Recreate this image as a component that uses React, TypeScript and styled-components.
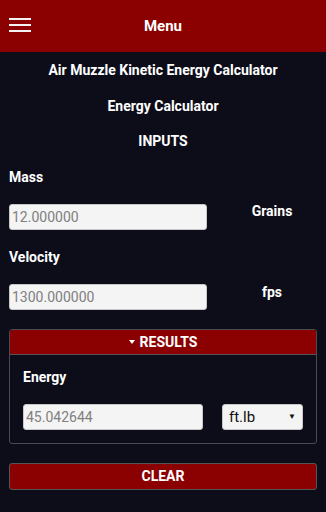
import React from 'react';
import styled, {createGlobalStyle} from 'styled-components';

const red = '#8b0000';
const bg = '#0d0d1a';
const light = '#f4f4f4';

const GlobalStyle = createGlobalStyle`
    html, body {
        margin: 0;
        padding: 0;
        background: ${bg};
    }
    body {
        font-family: Roboto, "Liberation Sans", sans-serif;
        color: #ffffff;
    }
`

const Page = styled.div`
    width: 326px;
    min-height: 512px;
    background: ${bg};
`

const Header = styled.header`
    height: 52px;
    background: ${red};
    display: flex;
    align-items: center;
    position: relative;
    justify-content: center;
`

const Burger = styled.div`
    position: absolute;
    left: 9px;
    top: 18px;
    width: 22px;
    display: flex;
    flex-direction: column;
    gap: 4px;

    span{
        display: block;
        height: 2px;
        background: #f2f2f2;
    }
`

const HeaderTitle = styled.h1`
    margin: 0;
    font-size: 15px;
    font-weight: 700;
`

const Main = styled.main`
    padding: 9px 9px 20px 9px;
`

const Heading = styled.h2`
    margin: 0;
    height: 35.5px;
    line-height: 19px;
    font-size: 14px;
    font-weight: 700;
    text-align: center;
`

const Label = styled.div`
    font-size: 14px;
    font-weight: 700;
    height: 36px;
    line-height: 18px;
`

type RowProps = {
    unitOffset: number;
}

const InputRow = styled.div`
    display: flex;
    align-items: flex-start;
    height: 44px;
`

const Field = styled.div<{w: number}>`
    width: ${({w}) => w}px;
    height: 26px;
    box-sizing: border-box;
    background: ${light};
    border: 1px solid #c8c8c8;
    border-radius: 3px;
    color: #808080;
    font-size: 14px;
    padding: 0 2px;
    display: flex;
    align-items: center;
`

const Unit = styled.div<RowProps>`
    flex: 1;
    padding-left: 20px;
    text-align: center;
    font-size: 14px;
    font-weight: 700;
    margin-top: ${({unitOffset}) => unitOffset}px;
`

const Panel = styled.section`
    margin-top: 1px;
    border: 1px solid #4a4a50;
    border-radius: 3px;
    overflow: hidden;
`

const PanelHeader = styled.div`
    height: 24px;
    background: ${red};
    border-bottom: 1px solid #555;
    display: flex;
    align-items: center;
    justify-content: center;
    gap: 5px;
    font-size: 14px;
    font-weight: 700;
`

const Caret = styled.span`
    width: 0;
    height: 0;
    border-left: 3px solid transparent;
    border-right: 3px solid transparent;
    border-top: 4px solid #fff;
`

const PanelBody = styled.div`
    padding: 13px 13px 13px 13px;
`

const ResultRow = styled.div`
    display: flex;
    align-items: center;
    justify-content: space-between;
`

const Select = styled.div`
    width: 81px;
    height: 26px;
    box-sizing: border-box;
    background: ${light};
    border: 1px solid #c8c8c8;
    border-radius: 3px;
    color: #111;
    font-size: 15px;
    padding: 0 6px;
    display: flex;
    align-items: center;
    justify-content: space-between;

    small{
        font-size: 8px;
    }
`

const ClearButton = styled.button`
    margin-top: 19px;
    width: 100%;
    height: 27px;
    background: ${red};
    border: 1px solid #555;
    border-radius: 3px;
    color: #fff;
    font-family: inherit;
    font-size: 14px;
    font-weight: 700;
    cursor: pointer;
`

function App(){
 return(
  <>
  <GlobalStyle/>
  <Page>
    <Header>
        <Burger><span/><span/><span/></Burger>
        <HeaderTitle>Menu</HeaderTitle>
    </Header>
    <Main>
        <Heading>Air Muzzle Kinetic Energy Calculator</Heading>
        <Heading>Energy Calculator</Heading>
        <Heading>INPUTS</Heading>
        <Label>Mass</Label>
        <InputRow>
            <Field w={198}>12.000000</Field>
            <Unit unitOffset={-1}>Grains</Unit>
        </InputRow>
        <Label>Velocity</Label>
        <InputRow>
            <Field w={198}>1300.000000</Field>
            <Unit unitOffset={0}>fps</Unit>
        </InputRow>
        <Panel>
            <PanelHeader><Caret/>RESULTS</PanelHeader>
            <PanelBody>
                <Label>Energy</Label>
                <ResultRow>
                    <Field w={180}>45.042644</Field>
                    <Select>ft.lb<small>▼</small></Select>
                </ResultRow>
            </PanelBody>
        </Panel>
        <ClearButton>CLEAR</ClearButton>
    </Main>
  </Page>
  </>
 )
}

export default App
